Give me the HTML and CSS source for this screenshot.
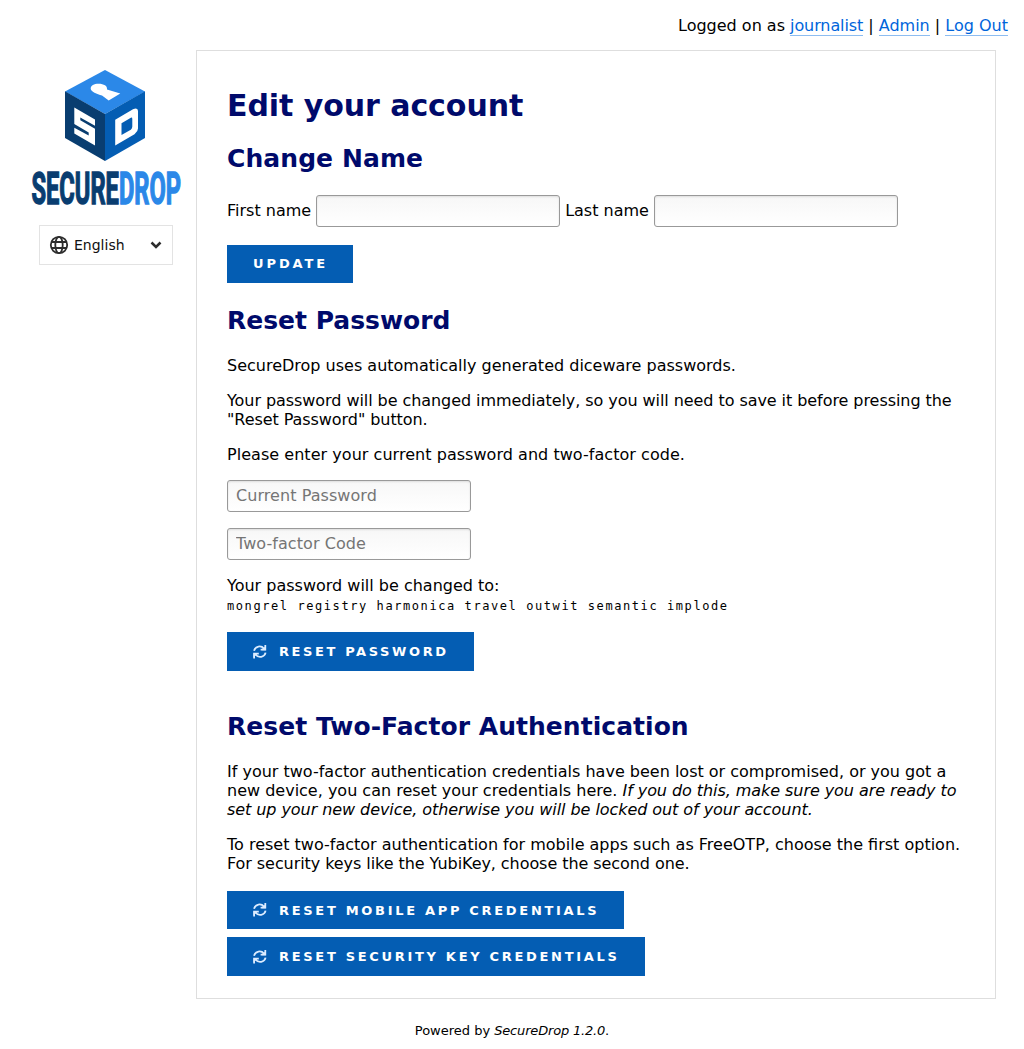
FILE: index.html
```html
<!DOCTYPE html>
<html lang="en">
<head>
<meta charset="utf-8">
<title>SecureDrop</title>
<link rel="stylesheet" href="styles.css">
</head>
<body>
<svg class="defs" width="0" height="0" aria-hidden="true">
  <symbol id="refresh" viewBox="0 0 14 14"><path d="M1 5.8C2.2.8 8.2.2 11 3.6M12.3 0V4.7H7.6M12.6 7.6C11.4 12.6 5.4 13.2 2.6 9.8M1.1 13.4V8.7H5.8" fill="none" stroke="#dcecff" stroke-width="1.8"/><path d="M12.8 1V5.2H8.6ZM.6 12.4V8.2H4.8Z" fill="#dcecff"/></symbol>
</svg>
<header class="session">Logged on as <a class="user" href="#">journalist</a> | <a href="#">Admin</a> | <a href="#">Log Out</a></header>
<div class="layout">
  <aside class="sidebar">
    <svg class="logo" viewBox="0 0 152 138" role="img" aria-label="SecureDrop">
      <path fill="#2b88e8" d="M74 0 114 21.5 74 44 34 21.5Z"/>
      <path fill="#093d70" d="M34 21.3 74 44V91L34 68Z"/>
      <path fill="#045db3" d="M114 21.3 74 44V91L114 68Z"/>
      <path fill="#fff" d="M71 25.5C66 24 59.7 22 59.7 18.5 59.7 15.5 63 13.8 67.5 13.8 73 13.8 76.5 16 76 19.5L89.3 23.6 77.7 30.5Z"/>
      <path fill="#fff" d="M43.3 37.5 64 49.5V55.7L49.3 47.5V50.3L64 58.8V75.5L43.3 63.4V57.7L57.7 65.5V62.5L43.3 54Z"/>
      <path fill="#fff" fill-rule="evenodd" d="M84.2 49.8 102 39.2Q107 37 107 41V58.5Q107 61.5 103.5 64.2L84.2 75.5ZM90.5 53.3V65L99.8 59.7Q101.3 58.5 101.3 56.5V49Q101.3 46.7 99 48.2Z"/>
      <text class="wordmark" x="0.5" y="134" textLength="149.5" lengthAdjust="spacingAndGlyphs"><tspan class="secure">SECURE</tspan><tspan class="drop">DROP</tspan></text>
    </svg>
    <button class="language" type="button">
      <svg class="globe" viewBox="0 0 20 20"><circle cx="10" cy="10" r="8.2"/><ellipse cx="10" cy="10" rx="3.7" ry="8.2"/><path d="M2.5 7H17.5M2.5 13H17.5"/></svg>
      <span>English</span>
      <svg class="chevron" viewBox="0 0 12 8"><path d="M1.5 1.5 6 6 10.5 1.5"/></svg>
    </button>
  </aside>
  <main class="panel">
    <h1>Edit your account</h1>
    <h2 class="name-title">Change Name</h2>
    <form class="names">
      <label for="first">First name</label><input id="first" type="text">
      <label for="last">Last name</label><input id="last" type="text">
    </form>
    <button class="btn update" type="button">Update</button>
    <h2 class="password-title">Reset Password</h2>
    <p>SecureDrop uses automatically generated diceware passwords.</p>
    <p class="tight">Your password will be changed immediately, so you will need to save it before pressing the "Reset Password" button.</p>
    <p class="loose">Please enter your current password and two-factor code.</p>
    <form class="credentials">
      <input type="password" placeholder="Current Password">
      <input type="text" placeholder="Two-factor Code">
    </form>
    <div>Your password will be changed to:</div>
    <div class="passphrase">mongrel registry harmonica travel outwit semantic implode</div>
    <button class="btn tall" type="button"><svg><use href="#refresh"/></svg>Reset Password</button>
    <h2 class="factor-title">Reset Two-Factor Authentication</h2>
    <p>If your two-factor authentication credentials have been lost or compromised, or you got a new device, you can reset your credentials here. <em class="tight">If you do this, make sure you are ready to set up your new device, otherwise you will be locked out of your account.</em></p>
    <p>To reset two-factor authentication for mobile apps such as FreeOTP, choose the first option. <span class="tight">For security keys like the YubiKey, choose the second one.</span></p>
    <div class="resets">
      <button class="btn wide" type="button"><svg><use href="#refresh"/></svg>Reset Mobile App Credentials</button>
      <button class="btn wide tall" type="button"><svg><use href="#refresh"/></svg>Reset Security Key Credentials</button>
    </div>
  </main>
</div>
<footer>Powered by <em>SecureDrop 1.2.0</em>.</footer>
</body>
</html>
```

FILE: styles.css
```css
* { box-sizing: border-box; }
body { margin: 0; font: 16px/19px "DejaVu Sans", sans-serif; color: #000; background: #fff; }
.defs { display: block; }
.session { height: 50px; padding: 16px 16px 0; text-align: right; }
.session a { color: #0065db; text-decoration: none; border-bottom: 1px solid #8dbdf1; }
.session .user { letter-spacing: -0.1px; }
.layout { display: flex; }
.sidebar { width: 196px; padding: 20px 0 0 31px; }
.logo { display: block; width: 152px; height: 138px; overflow: visible; }
.wordmark { font: 700 44.5px Roboto, "Liberation Sans Narrow", sans-serif; stroke-width: 1.5px; }
.secure { fill: #093d70; stroke: #093d70; }
.drop { fill: #2b88e8; stroke: #2b88e8; }
.language { display: flex; align-items: center; width: 134px; height: 40px; margin: 17px 0 0 8px; padding: 0 10px 0 9px; border: 1px solid #e3e3e3; background: #fff; font: 14px "DejaVu Sans", sans-serif; color: #111; }
.globe { width: 20px; height: 20px; margin-right: 5px; fill: none; stroke: #2d2d2d; stroke-width: 1.8; }
.chevron { width: 12px; height: 8px; margin-left: auto; fill: none; stroke: #2d2d2d; stroke-width: 2.5; }
.panel { width: 800px; height: 949px; padding: 36px 30px 0; border: 1px solid #dedede; }
h1, h2 { margin: 0; color: #000a6b; font-weight: 700; }
h1 { font-size: 30px; line-height: 37px; margin-bottom: 20px; letter-spacing: -0.06px; }
h2 { font-size: 25px; line-height: 29px; margin-bottom: 21px; }
p { margin: 0 0 16px; }
.tight { letter-spacing: -0.065px; }
.loose { letter-spacing: 0.04px; }
input { width: 244px; height: 32px; padding: 0 8px 2px; border: 1px solid #999; border-radius: 3px; background: linear-gradient(#f7f7f7, #fff); box-shadow: inset 0 1px 2px #ddd; font: 16px "DejaVu Sans", sans-serif; letter-spacing: 0.06px; }
input::placeholder { color: #757575; opacity: 1; }
.name-title { margin-bottom: 22px; letter-spacing: 0.08px; }
.names { display: flex; align-items: center; gap: 5px; margin-bottom: 18px; }
.names label { padding-bottom: 2px; }
.credentials { display: flex; flex-direction: column; gap: 16px; margin-bottom: 16px; }
.btn { display: flex; align-items: center; height: 38px; padding: 0 25px 0 26px; border: 0; background: #045db3; color: #fff; font: 700 13px "DejaVu Sans", sans-serif; letter-spacing: 2.6px; text-transform: uppercase; }
.btn.update { padding-bottom: 2px; letter-spacing: 2.9px; }
.btn.wide { letter-spacing: 2.69px; }
.btn.tall { height: 39px; }
.btn svg { width: 14px; height: 14px; margin-right: 12px; }
.password-title { margin-top: 23px; }
.passphrase { margin: 2px 0 16px; font: 12px/19px "DejaVu Sans Mono", monospace; letter-spacing: 1.575px; }
.factor-title { margin-top: 41px; letter-spacing: 0.04px; }
.resets { display: flex; flex-direction: column; align-items: flex-start; gap: 8px; margin-top: 18px; }
footer { margin-top: 22px; text-align: center; font-size: 13px; }
footer em { letter-spacing: -0.18px; }
```
